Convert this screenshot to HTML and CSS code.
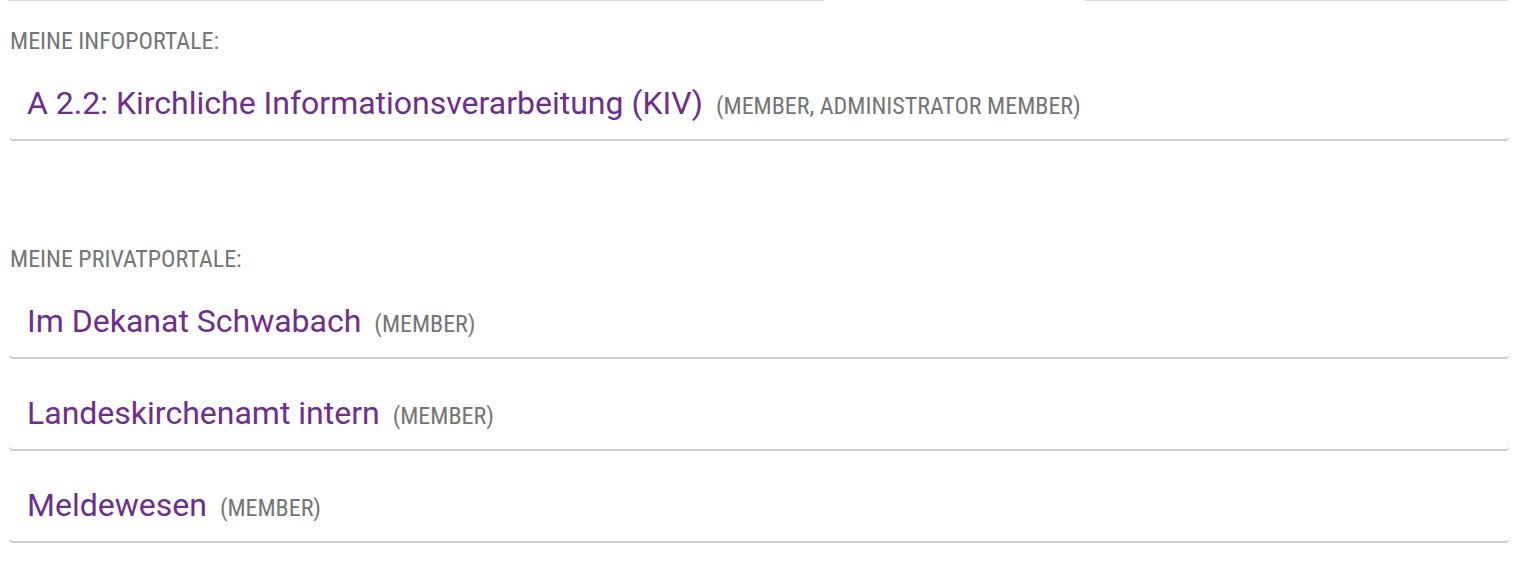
FILE: index.html
```html
<!DOCTYPE html>
<html lang="de">
<head>
<meta charset="utf-8">
<title>Meine Portale</title>
<link rel="stylesheet" href="styles.css">
</head>
<body>
<div class="page">
  <div class="top-edges">
    <div class="edge edge-a"></div>
    <div class="edge-gap"></div>
    <div class="edge edge-b"></div>
  </div>

  <section class="section">
    <h2 class="section-label">MEINE INFOPORTALE:</h2>
    <ul class="portal-list">
      <li class="portal-card">
        <div class="portal-line">
          <a class="portal-title" href="#">A 2.2: Kirchliche Informationsverarbeitung (KIV)</a>
          <span class="portal-role">(MEMBER, ADMINISTRATOR MEMBER)</span>
        </div>
      </li>
    </ul>
  </section>

  <section class="section section-private">
    <h2 class="section-label">MEINE PRIVATPORTALE:</h2>
    <ul class="portal-list">
      <li class="portal-card">
        <div class="portal-line">
          <a class="portal-title" href="#">Im Dekanat Schwabach</a>
          <span class="portal-role">(MEMBER)</span>
        </div>
      </li>
      <li class="portal-card">
        <div class="portal-line">
          <a class="portal-title" href="#">Landeskirchenamt intern</a>
          <span class="portal-role">(MEMBER)</span>
        </div>
      </li>
      <li class="portal-card">
        <div class="portal-line">
          <a class="portal-title" href="#">Meldewesen</a>
          <span class="portal-role">(MEMBER)</span>
        </div>
      </li>
    </ul>
  </section>
</div>
</body>
</html>
```

FILE: styles.css
```css
html, body {
  margin: 0;
  padding: 0;
  background: #ffffff;
}

body {
  font-family: Roboto, "Noto Sans", "Liberation Sans", sans-serif;
  color: #333;
}

.page {
  padding: 0 11px 0 9px;
}

.top-edges {
  display: flex;
  height: 1px;
}

.edge {
  height: 1px;
  background: #dcdcdc;
}

.edge-a {
  width: 816px;
  margin-left: -1px;
}

.edge-gap {
  width: 260px;
}

.edge-b {
  flex: 1;
}

.section {
  margin-top: 28px;
}

.section-private {
  margin-top: 104px;
}

.section-label {
  margin: 0 0 14px 1px;
  font-size: 24px;
  line-height: 24px;
  font-weight: 400;
  color: #757575;
  font-stretch: condensed;
}

.portal-list {
  list-style: none;
  margin: 0;
  padding: 0 0 4px;
  display: flex;
  flex-direction: column;
  gap: 20px;
}

.portal-card {
  display: flex;
  align-items: center;
  height: 72px;
  box-sizing: border-box;
  padding: 0 18px;
  background: #fff;
  border-radius: 4px;
  box-shadow: 0 2px 0 0 rgba(0, 0, 0, 0.2);
}

.portal-line {
  display: flex;
  align-items: baseline;
  gap: 13px;
}

.portal-title {
  font-size: 32px;
  line-height: 38px;
  color: #6d2e8d;
  text-decoration: none;
}

.portal-role {
  font-size: 24px;
  color: #757575;
  font-stretch: condensed;
}
```
